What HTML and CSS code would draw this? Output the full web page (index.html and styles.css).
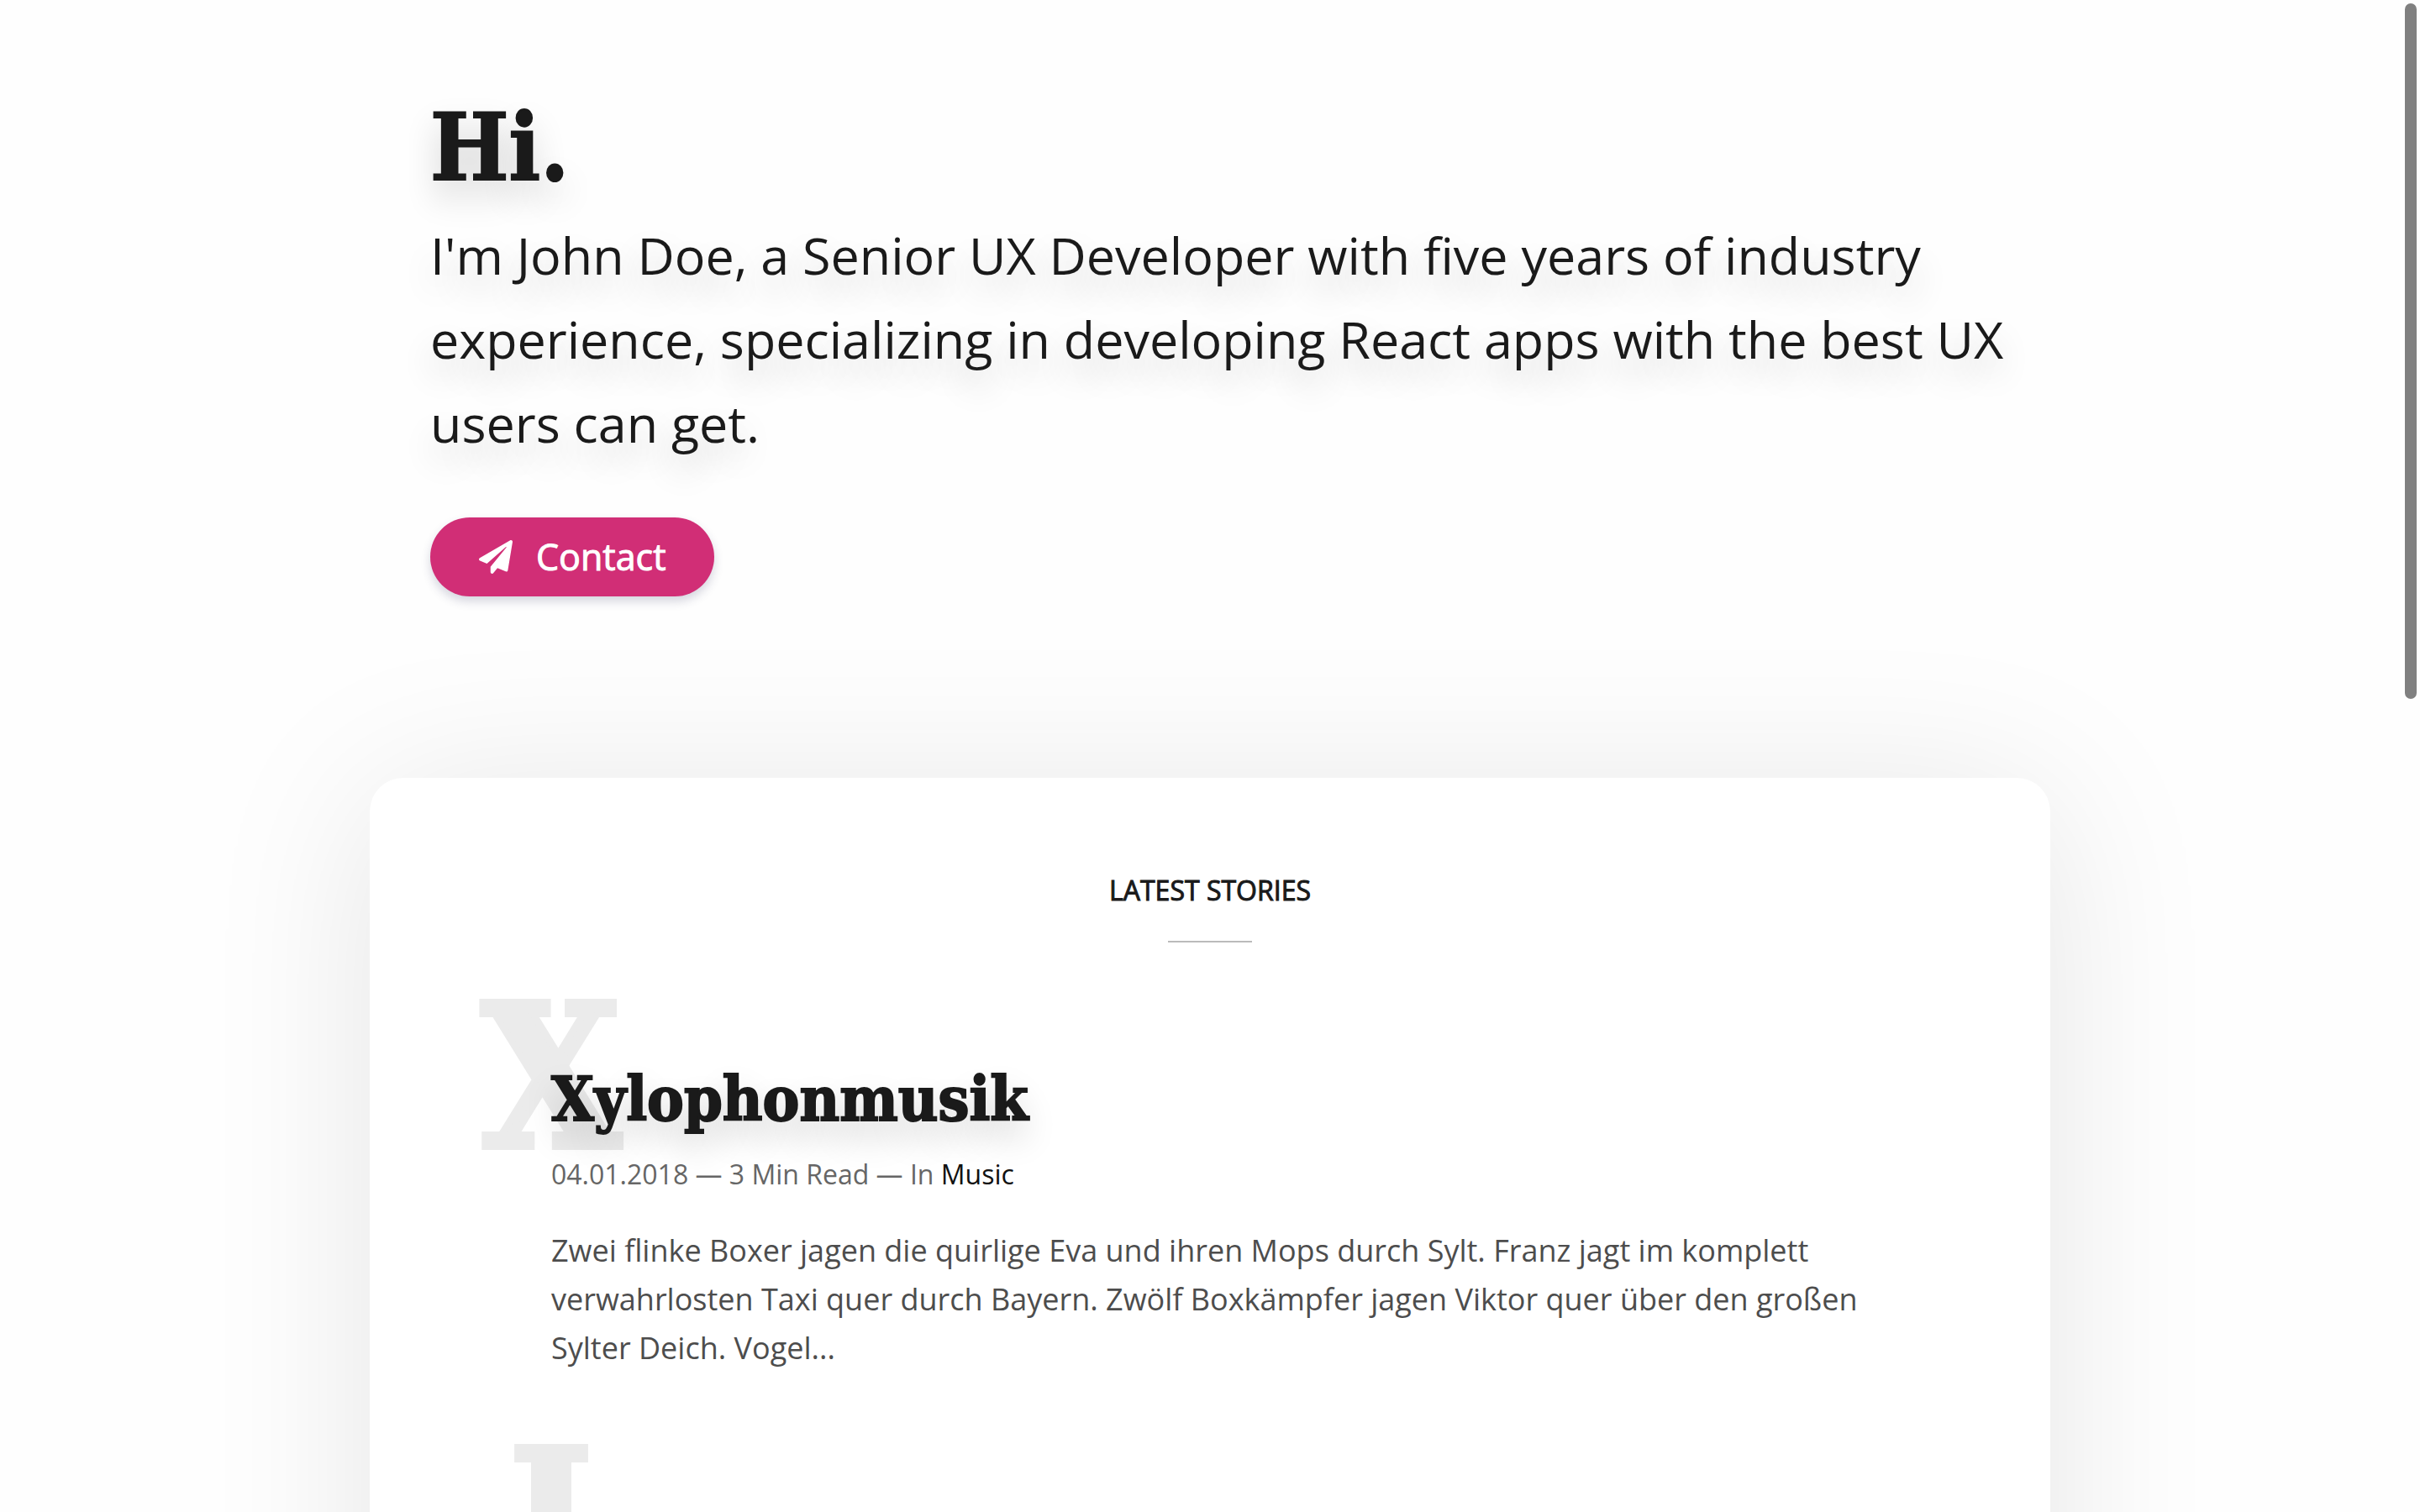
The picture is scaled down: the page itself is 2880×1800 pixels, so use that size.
FILE: index.html
```html
<!DOCTYPE html>
<html lang="en">
<head>
<meta charset="utf-8">
<meta name="viewport" content="width=device-width, initial-scale=1">
<title>John Doe</title>
<link rel="stylesheet" href="styles.css">
</head>
<body>
<header class="hero">
  <h1 class="hero-title">Hi.</h1>
  <p class="hero-text">I'm John Doe, a Senior UX Developer with five years of industry experience, specializing in developing React apps with the best UX users can get.</p>
  <button class="contact" type="button">
    <svg class="contact-icon" viewBox="0 0 512 512" aria-hidden="true"><path fill="currentColor" d="M476 3.200L12.500 270.600c-18.100 10.400-15.800 35.600 2.200 43.200L121 358.400l287.300-253.200c5.500-4.900 13.300 2.600 8.600 8.300L176 407v80.500c0 23.600 28.500 32.900 42.500 15.800L282 426l124.600 52.200c14.200 6 30.400-2.900 33-18.200l72-432C515 7.800 493.300-6.800 476 3.200z"/></svg>
    Contact
  </button>
</header>
<main class="card">
  <h2 class="section-title">Latest Stories</h2>
  <article class="story">
    <span class="initial" aria-hidden="true">X</span>
    <h3 class="story-title">Xylophonmusik</h3>
    <p class="meta">04.01.2018 — 3 Min Read — In <a class="meta-link" href="#music">Music</a></p>
    <p class="excerpt" lang="de">Zwei flinke Boxer jagen die quirlige Eva und ihren Mops durch Sylt. Franz jagt im komplett verwahrlosten Taxi quer durch Bayern. Zwölf Boxkämpfer jagen Viktor quer über den großen Sylter Deich. Vogel...</p>
  </article>
  <article class="story">
    <span class="initial" aria-hidden="true">I</span>
  </article>
</main>
<div class="scroll-thumb" aria-hidden="true"></div>
</body>
</html>
```
FILE: styles.css
```css
* {
  box-sizing: border-box;
}

html {
  scrollbar-width: none;
}

body {
  margin: 0;
  background: #fefefe;
  color: #1a1a1a;
  font-family: "Open Sans", "Noto Sans", sans-serif;
}

h1, h2, h3, p {
  margin: 0;
}

.hero,
.card {
  width: calc(100% - 80px);
  max-width: 2000px;
  margin: 0 auto;
}

.hero {
  padding: 104px 48px 216px 72px;
}

.hero-title,
.story-title,
.initial {
  font-family: "DejaVu Serif Condensed", "DejaVu Serif", serif;
  font-stretch: condensed;
  font-weight: 700;
}

.hero-title,
.hero-text,
.story-title {
  text-shadow: 0 20px 40px rgba(0, 0, 0, 0.2);
}

.hero-title {
  font-size: 110px;
  line-height: 144px;
  -webkit-text-stroke: 2px currentColor;
}

.hero-text {
  margin-top: 6px;
  font-size: 61px;
  line-height: 100px;
}

.contact {
  display: flex;
  align-items: center;
  gap: 28px;
  height: 94px;
  margin-top: 62px;
  padding: 0 58px;
  border: 0;
  border-radius: 47px;
  background: #d12e76;
  color: #fff;
  font: 43px/60px "Open Sans", sans-serif;
  -webkit-text-stroke: 1px currentColor;
  box-shadow: 0 6px 12px rgba(50, 50, 93, 0.2);
}

.contact-icon {
  width: 40px;
  height: 40px;
}

.card {
  min-height: 100vh;
  padding: 110px 216px;
  border-radius: 40px;
  background: #fff;
  box-shadow: 0 20px 200px rgba(0, 0, 0, 0.1);
}

.section-title {
  font-size: 32px;
  font-weight: 400;
  line-height: 48px;
  text-align: center;
  text-transform: uppercase;
  -webkit-text-stroke: 1px currentColor;
}

.section-title::after {
  content: "";
  display: block;
  width: 100px;
  height: 2px;
  margin: 36px auto 0;
  background: #bbb;
}

.story {
  position: relative;
  margin-top: 70px;
  padding-top: 72px;
  min-height: 460px;
}

/* oversized first letter, centred on the left edge of the title */
.initial {
  position: absolute;
  z-index: 0;
  top: 0;
  left: 0;
  transform: translateX(-50%);
  color: #ebebeb;
  font-size: 236px;
  line-height: 180px;
  -webkit-text-stroke: 8px currentColor;
}

.story-title {
  position: relative;
  font-size: 73px;
  line-height: 88px;
  -webkit-text-stroke: 2px currentColor;
}

.meta {
  position: relative;
  margin-top: 22px;
  color: #666;
  font-size: 32px;
  line-height: 48px;
}

.meta-link {
  color: #111;
  text-decoration: none;
}

.excerpt {
  margin-top: 38px;
  color: #4d4d4d;
  font-size: 36px;
  line-height: 58px;
}

.scroll-thumb {
  position: fixed;
  top: 4px;
  right: 4px;
  width: 14px;
  height: 46vh;
  border-radius: 7px;
  background: #808080;
}
```
